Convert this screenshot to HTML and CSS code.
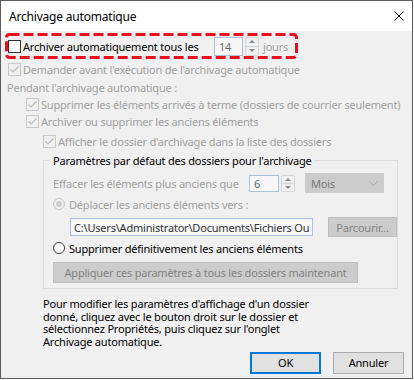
FILE: index.html
```html
<!DOCTYPE html>
<html lang="fr">
<head>
    <meta charset="UTF-8">
    <title>Archivage automatique</title>
    <link rel="stylesheet" href="styles.css">
</head>
<body>
    <div class="window">
        <div class="titlebar">
            <span class="title">Archivage automatique</span>
            <svg class="close" width="10" height="10" viewBox="0 0 10 10">
                <path d="M0.5 0.5 L9.5 9.5 M9.5 0.5 L0.5 9.5" stroke="#000" stroke-width="1" fill="none"/>
            </svg>
        </div>

        <div class="content">
            <div class="row row-main">
                <span class="cb"></span>
                <span class="label label-main">Archiver automatiquement tous les</span>
                <span class="field field-days">14</span>
                <span class="spin"><span class="up"></span><span class="down"></span></span>
                <span class="muted unit">jours</span>
                <!-- annotation drawn over the row -->
                <svg class="highlight" width="293" height="26" viewBox="0 0 293 26">
                    <rect x="1.5" y="1.5" width="290" height="23" rx="3" fill="none" stroke="#e8101c" stroke-width="3" stroke-dasharray="10 4"/>
                </svg>
            </div>

            <div class="row row-ask">
                <span class="cb off"><svg width="11" height="11" viewBox="0 0 11 11"><path d="M1.5 5.5 L4 8 L9.5 2.5" fill="none" stroke="#bdbdbd" stroke-width="1.2"/></svg></span>
                <span class="muted">Demander avant l'exécution de l'archivage automatique</span>
            </div>

            <div class="row row-during">
                <span class="muted">Pendant l'archivage automatique :</span>
            </div>

            <div class="row row-expired indent-1">
                <span class="cb off"><svg width="11" height="11" viewBox="0 0 11 11"><path d="M1.5 5.5 L4 8 L9.5 2.5" fill="none" stroke="#bdbdbd" stroke-width="1.2"/></svg></span>
                <span class="muted">Supprimer les éléments arrivés à terme (dossiers de courrier seulement)</span>
            </div>

            <div class="row row-old indent-1">
                <span class="cb off"><svg width="11" height="11" viewBox="0 0 11 11"><path d="M1.5 5.5 L4 8 L9.5 2.5" fill="none" stroke="#bdbdbd" stroke-width="1.2"/></svg></span>
                <span class="muted">Archiver ou supprimer les anciens éléments</span>
            </div>

            <div class="row row-show indent-2">
                <span class="cb off"><svg width="11" height="11" viewBox="0 0 11 11"><path d="M1.5 5.5 L4 8 L9.5 2.5" fill="none" stroke="#bdbdbd" stroke-width="1.2"/></svg></span>
                <span class="muted">Afficher le dossier d'archivage dans la liste des dossiers</span>
            </div>

            <fieldset class="group">
                <legend>Paramètres par défaut des dossiers pour l'archivage</legend>

                <div class="row row-age">
                    <span class="muted label-age">Effacer les éléments plus anciens que</span>
                    <span class="field field-age">6</span>
                    <span class="spin spin-age"><span class="up"></span><span class="down"></span></span>
                    <span class="select">
                        <span>Mois</span>
                        <svg width="9" height="5" viewBox="0 0 9 5"><path d="M0.5 0.5 L4.5 4.5 L8.5 0.5" fill="none" stroke="#ababab" stroke-width="1"/></svg>
                    </span>
                </div>

                <div class="row row-radio">
                    <span class="radio off"><span class="dot"></span></span>
                    <span class="muted">Déplacer les anciens éléments vers :</span>
                </div>

                <div class="row row-path">
                    <span class="field field-path">C:\Users\Administrator\Documents\Fichiers Ou</span>
                    <span class="btn btn-browse">Parcourir...</span>
                </div>

                <div class="row row-radio">
                    <span class="radio"></span>
                    <span>Supprimer définitivement les anciens éléments</span>
                </div>

                <span class="btn btn-apply">Appliquer ces paramètres à tous les dossiers maintenant</span>
            </fieldset>

            <p class="note">Pour modifier les paramètres d'affichage d'un dossier<br>donné, cliquez avec le bouton droit sur le dossier et<br>sélectionnez Propriétés, puis cliquez sur l'onglet<br>Archivage automatique.</p>

            <div class="actions">
                <span class="btn-action btn-default">OK</span>
                <span class="btn-action">Annuler</span>
            </div>
        </div>
    </div>
</body>
</html>
```

FILE: styles.css
```css
* {
    box-sizing: border-box;
}
body {
    margin: 0;
    background-color: #FFFFFF;
    font-family: "Noto Sans", "DejaVu Sans", sans-serif;
    font-size: 11px;
    letter-spacing: -0.2px;
    color: #000000;
}
.window {
    width: 413px;
    height: 379px;
    border: 1px solid #5c5c5c;
    background-color: #F0F0F0;
}
.titlebar {
    height: 30px;
    background-color: #FFFFFF;
    display: flex;
    align-items: center;
    justify-content: space-between;
    padding: 0 8px;
    font-size: 12px;
}
.content {
    padding: 2px 7px 0 7px;
}
.row {
    display: flex;
    align-items: center;
    white-space: nowrap;
}
.muted {
    color: #A0A0A0;
}

/* first line with the red annotation */
.row-main {
    position: relative;
    height: 26px;
}
.highlight {
    position: absolute;
    left: -3px;
    top: 0;
}
.label-main {
    width: 191px;
}
.unit {
    margin-left: 4px;
}
.row-ask {
    height: 20px;
}
.row-during {
    height: 17px;
    margin-left: -1px;
}
.row-expired, .row-old {
    height: 17px;
}
.row-show {
    height: 17px;
    margin-top: 3px;
}
.indent-1 {
    padding-left: 18px;
}
.indent-2 {
    padding-left: 35px;
}

/* checkboxes and radios */
.cb {
    flex: none;
    width: 13px;
    height: 13px;
    border: 1px solid #333333;
    background-color: #FFFFFF;
    margin-right: 2px;
    display: flex;
    align-items: center;
    justify-content: center;
}
.cb.off {
    border-color: #C8C8C8;
    background-color: #F0F0F0;
}
.radio {
    flex: none;
    width: 12px;
    height: 12px;
    border-radius: 50%;
    border: 1px solid #333333;
    background-color: #FFFFFF;
    margin-right: 4px;
    display: flex;
    align-items: center;
    justify-content: center;
}
.radio.off {
    border-color: #C4C4C4;
    background-color: #F0F0F0;
}
.radio .dot {
    width: 6px;
    height: 6px;
    border-radius: 50%;
    background-color: #CCCCCC;
}

/* text fields and spinners */
.field {
    flex: none;
    display: flex;
    align-items: center;
    border: 1px solid #ABC0DC;
    background-color: #F7F7F7;
    padding-left: 4px;
    overflow: hidden;
}
.field-days {
    width: 29px;
    height: 19px;
    color: #6D6D6D;
}
.field-age {
    width: 30px;
    height: 17px;
    color: #5A6A80;
}
.field-path {
    width: 243px;
    height: 18px;
    margin-left: 17px;
    padding-left: 3px;
    color: #333333;
}
.spin {
    flex: none;
    width: 14px;
    height: 19px;
    margin-left: 2px;
    border: 1px solid #D6D6D6;
    border-radius: 2px;
    display: flex;
    flex-direction: column;
}
.spin-age {
    height: 17px;
}
.spin .up, .spin .down {
    flex: 1;
    display: flex;
    align-items: center;
    justify-content: center;
}
.spin .up {
    border-bottom: 1px solid #D6D6D6;
}
.spin .up::after {
    content: "";
    border-left: 3px solid transparent;
    border-right: 3px solid transparent;
    border-bottom: 3px solid #8C8C8C;
}
.spin .down::after {
    content: "";
    border-left: 3px solid transparent;
    border-right: 3px solid transparent;
    border-top: 3px solid #8C8C8C;
}

/* group box */
.group {
    margin: 2px 7px 0 35px;
    padding: 0 0 5px 9px;
    border: 1px solid #DCDCDC;
    min-width: 0;
}
.group legend {
    padding: 0 3px;
    margin-left: -3px;
    line-height: 17px;
}
.row-age {
    height: 22px;
    margin-top: 3px;
}
.label-age {
    width: 196px;
}
.select {
    flex: none;
    width: 79px;
    height: 20px;
    margin-left: 10px;
    padding: 0 5px 0 5px;
    background-color: #CCCCCC;
    border: 1px solid #CCCCCC;
    color: #7A7A7A;
    display: flex;
    align-items: center;
    justify-content: space-between;
}
.row-radio {
    height: 18px;
    margin-top: 1px;
}
.row-path {
    height: 22px;
    margin-top: 3px;
}
.btn {
    display: flex;
    align-items: center;
    justify-content: center;
    background-color: #CCCCCC;
    border: 1px solid #BFBFBF;
    color: #838383;
}
.btn-browse {
    width: 69px;
    height: 20px;
    margin-left: 15px;
}
.btn-apply {
    width: 305px;
    height: 21px;
    margin-top: 5px;
}

.note {
    margin: 9px 0 0 35px;
    line-height: 12.7px;
    white-space: nowrap;
}
.actions {
    display: flex;
    justify-content: flex-end;
    gap: 12px;
    margin: 3px 1px 0 0;
}
.btn-action {
    width: 71px;
    height: 22px;
    display: flex;
    align-items: center;
    justify-content: center;
    background-color: #E1E1E1;
    border: 1px solid #ADADAD;
}
.btn-default {
    border: 2px solid #0078D7;
}
```
